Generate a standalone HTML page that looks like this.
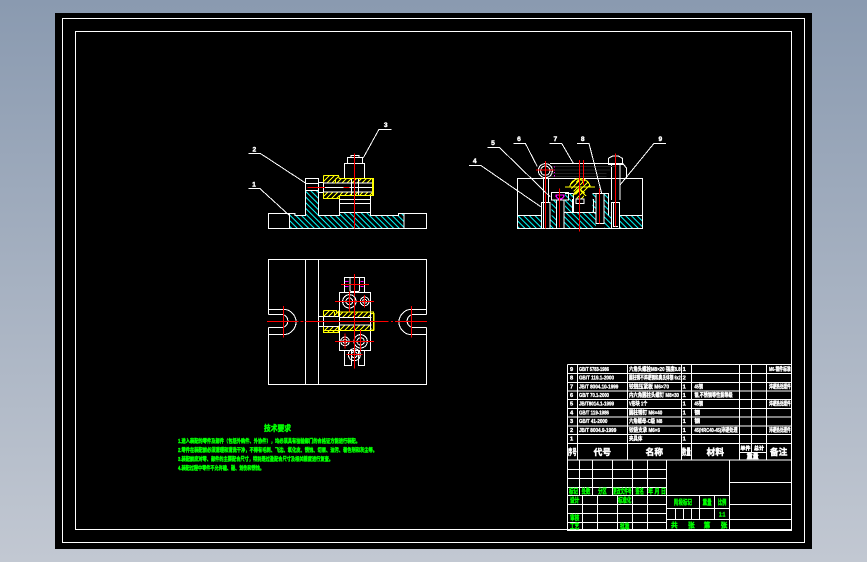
<!DOCTYPE html>
<html lang="zh"><head><meta charset="utf-8"><title>CAD</title>
<style>
html,body{margin:0;padding:0;width:867px;height:562px;overflow:hidden;background:linear-gradient(180deg,#8a9ab0 0%,#c2c8d2 100%)}
svg{position:absolute;left:0;top:0;display:block;shape-rendering:crispEdges}
svg *{shape-rendering:crispEdges}
text{font-family:"Liberation Sans","Noto Sans CJK SC",sans-serif;font-weight:700}
.w{fill:none;stroke:#fff;stroke-width:3.2}
.t{fill:none;stroke:#fff;stroke-width:3}
.r{fill:none;stroke:#f00;stroke-width:3.2}
.y{fill:none;stroke:#ff0;stroke-width:3.2}
.m{fill:none;stroke:#f0f;stroke-width:3.2}
.lab{fill:#fff;font-size:20px;stroke:#fff;stroke-width:1.2}
.tw{fill:#fff;font-size:17px;stroke:#fff;stroke-width:1.1}
.th{fill:#fff;font-size:26px;stroke:#fff;stroke-width:1.4}
.g{fill:#0f0;font-size:20px;stroke:#0f0;stroke-width:1.2}
.n{fill:#0f0;font-size:5.4px;stroke:#0f0;stroke-width:.42}
</style></head><body>
<svg width="867" height="562" viewBox="0 0 867 562" xmlns="http://www.w3.org/2000/svg">
<defs>
<pattern id="c" width="17" height="17" patternUnits="userSpaceOnUse"><path d="M0 0L17 17M-4 13L4 21M13 -4L21 4" stroke="#0ff" stroke-width="3"/></pattern>
<pattern id="yh" width="15" height="15" patternUnits="userSpaceOnUse"><path d="M0 15L15 0M-4 4L4 -4M11 19L19 11" stroke="#ff0" stroke-width="3.2"/></pattern>
</defs>
<rect x="55" y="13" width="757" height="536" fill="#000"/>
<rect x="62.5" y="18.5" width="742" height="524" fill="none" stroke="#fff"/>
<rect x="75.5" y="31.5" width="716" height="498" fill="none" stroke="#fff"/>

<!-- front view -->
<g transform="translate(230,110) scale(.33333)">
<path fill="url(#c)" d="M178 310H195V317H227V240H265V317H329V307H421V317H505V310H522V355H178Z"/>
<path fill="url(#yh)" d="M281 197H325V218H281ZM281 248H328V265H281ZM318 206H430V219H318ZM330 246H430V256H330Z"/>
<path class="w" d="M115 310H195V317H227V205H265V317H329V307H421V317H505V310H589V355H115ZM178 310V355M522 310V355"/>
<path class="w" d="M227 220H265V242H227ZM265 218H280V248H265ZM329 257V307M421 257V307M329 268H421M329 280H421"/>
<path class="w" d="M343 205V160H403V205M352 160V143H397V160M363 143V136H387V143"/>
<path class="w" d="M280 232H430M280 219H430M280 246H430M365 205V257M385 205V257"/>
<path class="y" d="M280 196H325L328 205H430V257H329V266H280V248M280 196V218M316 205V220M427 205V257"/>
<path class="r" d="M373 130V355M232 232H285M340 232H358"/>
<path class="t" d="M55 131H92L225 218M55 236H90L180 318M447 58H485M447 58L400 143"/>
<text class="lab" x="73" y="124" text-anchor="middle">2</text>
<text class="lab" x="72" y="229" text-anchor="middle">1</text>
<text class="lab" x="467" y="51" text-anchor="middle">3</text>
</g>

<!-- side view -->
<g transform="translate(450,125) scale(.33333)">
<path fill="url(#c)" d="M202 271H275V311H202ZM508 271H578V311H508ZM300 271H320V311H300ZM342 262H438V311H342ZM304 225H320V262H304ZM345 205H370V262H345ZM428 205H476V262H462V205H438V262H428ZM462 262H485V311H462Z"/>
<path class="w" d="M202 311V160H578V311ZM202 271H275M508 271H578M342 262H438"/>
<path class="w" d="M275 311V232H300V311M280 232V311M320 311V225H342V311M305 203H355V225H305ZM345 205H370M370 205V262M428 205H476V271M438 205V295H462V205M485 311V232H508V311M490 232V305H504M485 225V115H510V225M475 118V100L488 93H505L517 100V118ZM476 115H518"/>
<path class="w" d="M300 115H510M518 115L530 130V160"/>
<path d="M305 125H500M310 135H480M300 145H470M300 155H470" stroke="#222" stroke-width="3" fill="none"/>
<circle class="w" cx="286" cy="137" r="21"/><circle class="w" cx="286" cy="137" r="14"/>
<path class="w" d="M280 160V232M296 160V232"/>
<path class="m" d="M313 125v3M313 133v3M313 141v3M313 150v4"/>
<path d="M318 210A12 12 0 0 0 342 210Z" fill="none" stroke="#f0f" stroke-width="4"/>
<path d="M360 187A30 26 0 0 1 420 187L404 205L400 222H380L376 205Z" fill="url(#yh)"/>
<path class="y" d="M360 187A30 26 0 0 1 420 187M345 186H435M372 205L388 190L404 205M378 172L390 162L402 172M368 213L388 192L408 213"/>
<path class="w" d="M378 222H402V235H378ZM368 262V222M430 262V222"/>
<path class="r" d="M286 108V311M258 135H314M328 190V308M388 105V320M400 105V180M449 190V295M496 85V305"/>
<path class="t" d="M57 121H92L272 245M112 67H148L300 215M190 55H226L262 125M298 55H335L370 115M381 55H417L455 205M612 55H648M612 55L510 180"/>
<text class="lab" x="74" y="114" text-anchor="middle">4</text>
<text class="lab" x="129" y="60" text-anchor="middle">5</text>
<text class="lab" x="207" y="48" text-anchor="middle">6</text>
<text class="lab" x="316" y="48" text-anchor="middle">7</text>
<text class="lab" x="398" y="48" text-anchor="middle">8</text>
<text class="lab" x="631" y="48" text-anchor="middle">9</text>
</g>

<!-- plan view -->
<g transform="translate(255,250) scale(.33333)">
<path fill="url(#yh)" d="M205 181H250V199H205ZM205 229H250V247H205ZM250 185H350V201H250ZM250 227H350V243H250Z"/>
<path class="w" d="M40 178V28H514V178M40 254V403H514V254M151 28V403M190 28V403"/>
<path class="w" d="M40 178H85A38 38 0 0 1 85 254H40M40 194H85A20 20 0 0 1 85 232H40M40 178V194M40 232V254"/>
<path class="w" d="M514 178H470A38 38 0 0 0 470 254H514M514 194H470A20 20 0 0 0 470 232H514M514 178V194M514 232V254"/>
<path class="w" d="M253 127H347V302H253ZM268 127V82H329V127M285 82V118Q285 125 292 125H307Q314 125 314 118V82M268 302V346H290V302M329 302V346H310V302"/>
<circle class="w" cx="283" cy="154" r="20"/><circle class="w" cx="283" cy="154" r="10"/>
<circle class="w" cx="329" cy="154" r="13"/><circle class="w" cx="329" cy="154" r="6"/>
<circle class="w" cx="270" cy="274" r="13"/><circle class="w" cx="270" cy="274" r="6"/>
<circle class="w" cx="317" cy="274" r="20"/><circle class="w" cx="317" cy="274" r="11"/>
<circle class="w" cx="298" cy="314" r="18"/><circle class="w" cx="298" cy="314" r="9"/>
<path class="w" d="M190 199H205V230H190ZM205 199H253M205 230H253"/>
<path class="y" d="M205 181H245V186H355V242H205V247H250V229M205 181V199M205 229V247M250 181V199M238 186V199M350 190H357V240H350M212 214H240"/>
<path class="w" d="M255 203H350M255 225H350"/>
<path class="m" d="M270 95h10M316 95h10M270 109h10M316 109h10"/>
<path class="r" d="M36 214H130M137 214H145M152 214H400M408 214H414M420 214H516M85 168V262M470 168V262M298 72V140M298 145V356M258 103H342M240 154H325M315 154H357M283 125V185M329 135V172M240 274H300M300 274H357M270 250V296M317 240V305M275 314H322"/>
</g>

<!-- parts list -->
<g transform="translate(560,360) scale(.33333)">
<path class="w" d="M22 13H694M22 41H694M22 67H694M22 93H694M22 119H694M22 145H694M22 171H694M22 198H694M22 224H694M22 250H694M22 300H694M22 13V300M52 13V300M202 13V300M364 13V300M394 13V300M538 13V300M574 13V277M619 13V300M538 277H619"/>
<g class="tw">
<text x="30" y="33">9</text><text x="57" y="33" textLength="90" lengthAdjust="spacingAndGlyphs">GB/T 5783-1986</text><text x="207" y="33" textLength="155" lengthAdjust="spacingAndGlyphs">六角头螺栓M8×20 强度8.8</text><text x="368" y="33">1</text><text x="627" y="33" textLength="65" lengthAdjust="spacingAndGlyphs">M6-钢件标准</text>
<text x="30" y="59">8</text><text x="57" y="59" textLength="105" lengthAdjust="spacingAndGlyphs">GB/T 119.1-2000</text><text x="207" y="59" textLength="155" lengthAdjust="spacingAndGlyphs">圆柱销不淬硬钢和奥氏体钢 6x2</text><text x="368" y="59">2</text>
<text x="30" y="85">7</text><text x="57" y="85" textLength="118" lengthAdjust="spacingAndGlyphs">JB/T 8004.10-1999</text><text x="207" y="85" textLength="120" lengthAdjust="spacingAndGlyphs">铰链压紧板 M6×70</text><text x="368" y="85">1</text><text x="403" y="85" textLength="26" lengthAdjust="spacingAndGlyphs">45钢</text><text x="627" y="85" textLength="65" lengthAdjust="spacingAndGlyphs">淬硬热处理件</text>
<text x="30" y="111">6</text><text x="57" y="111" textLength="90" lengthAdjust="spacingAndGlyphs">GB/T 70.1-2000</text><text x="207" y="111" textLength="150" lengthAdjust="spacingAndGlyphs">内六角圆柱头螺钉 M8×30</text><text x="368" y="111">1</text><text x="403" y="111" textLength="115" lengthAdjust="spacingAndGlyphs">钢,不锈钢等性能等级</text>
<text x="30" y="137">5</text><text x="57" y="137" textLength="105" lengthAdjust="spacingAndGlyphs">JB/T8014.1-1999</text><text x="207" y="137" textLength="55" lengthAdjust="spacingAndGlyphs">V形块 1个</text><text x="368" y="137">1</text><text x="403" y="137" textLength="26" lengthAdjust="spacingAndGlyphs">45钢</text><text x="627" y="137" textLength="65" lengthAdjust="spacingAndGlyphs">淬硬热处理件</text>
<text x="30" y="163">4</text><text x="57" y="163" textLength="90" lengthAdjust="spacingAndGlyphs">GB/T 119-1986</text><text x="207" y="163" textLength="100" lengthAdjust="spacingAndGlyphs">圆柱销钉 M6×40</text><text x="368" y="163">1</text><text x="403" y="163">钢</text>
<text x="30" y="189">3</text><text x="57" y="189" textLength="85" lengthAdjust="spacingAndGlyphs">GB/T 41-2000</text><text x="207" y="189" textLength="100" lengthAdjust="spacingAndGlyphs">六角螺母-C级 M8</text><text x="368" y="189">1</text><text x="403" y="189">钢</text>
<text x="30" y="216">2</text><text x="57" y="216" textLength="112" lengthAdjust="spacingAndGlyphs">JB/T 8004.9-1999</text><text x="207" y="216" textLength="93" lengthAdjust="spacingAndGlyphs">铰链支承 M6×6</text><text x="368" y="216">1</text><text x="403" y="216" textLength="130" lengthAdjust="spacingAndGlyphs">45(HRC40-45)淬硬处理</text><text x="627" y="216" textLength="65" lengthAdjust="spacingAndGlyphs">淬硬热处理件</text>
<text x="30" y="242">1</text><text x="207" y="242" textLength="40" lengthAdjust="spacingAndGlyphs">夹具体</text><text x="368" y="242">1</text>
</g>
<g class="th">
<text x="37" y="285" text-anchor="middle" textLength="26" lengthAdjust="spacingAndGlyphs">序号</text>
<text x="127" y="285" text-anchor="middle">代号</text>
<text x="283" y="285" text-anchor="middle">名称</text>
<text x="379" y="285" text-anchor="middle" textLength="26" lengthAdjust="spacingAndGlyphs">数量</text>
<text x="466" y="285" text-anchor="middle">材料</text>
<text x="656" y="285" text-anchor="middle">备注</text>
<text x="556" y="270" text-anchor="middle" style="font-size:15px">单件</text>
<text x="597" y="270" text-anchor="middle" style="font-size:15px">总计</text>
<text x="578" y="296" text-anchor="middle" style="font-size:18px">重量</text>
</g>
</g>

<!-- title block -->
<g transform="translate(560,455) scale(.33333)">
<path class="w" d="M22 15H694V226H22ZM22 43H319M22 70H319M22 97H319M22 121H319M22 148H319M22 175H319M22 202H319M58 15V121M97 15V121M157 15V121M217 15V226M262 15V226M67 121V226M112 121V226M172 121V226M319 15V226M508 15V226M319 121H508M319 160H508M319 193H508M418 121V193M463 121V193M346 160V193M370 160V193M394 160V193M508 82H694M508 148H694M508 193H694"/>
<g class="g">
<text x="27" y="116" textLength="27" lengthAdjust="spacingAndGlyphs">标记</text>
<text x="65" y="116" textLength="26" lengthAdjust="spacingAndGlyphs">处数</text>
<text x="114" y="116" textLength="26" lengthAdjust="spacingAndGlyphs">分区</text>
<text x="159" y="116" textLength="56" lengthAdjust="spacingAndGlyphs">更改文件号</text>
<text x="226" y="116" textLength="26" lengthAdjust="spacingAndGlyphs">签名</text>
<text x="264" y="116" textLength="54" lengthAdjust="spacingAndGlyphs">年 月 日</text>
<text x="30" y="142" textLength="28" lengthAdjust="spacingAndGlyphs">设计</text>
<text x="174" y="142" textLength="40" lengthAdjust="spacingAndGlyphs">标准化</text>
<text x="30" y="195" textLength="28" lengthAdjust="spacingAndGlyphs">审核</text>
<text x="30" y="221" textLength="28" lengthAdjust="spacingAndGlyphs">工艺</text>
<text x="180" y="221" textLength="28" lengthAdjust="spacingAndGlyphs">批准</text>
<text x="342" y="148" textLength="54" lengthAdjust="spacingAndGlyphs">阶段标记</text>
<text x="428" y="148" textLength="27" lengthAdjust="spacingAndGlyphs">重量</text>
<text x="474" y="148" textLength="25" lengthAdjust="spacingAndGlyphs">比例</text>
<text x="477" y="185" textLength="19" lengthAdjust="spacingAndGlyphs">1:1</text>
<text x="333" y="217">共</text><text x="384" y="217">张</text><text x="431" y="217">第</text><text x="482" y="217">张</text>
</g>
</g>

<!-- technical requirements -->
<text x="277.5" y="431" text-anchor="middle" style="font-size:8px;fill:#0f0;stroke:#0f0;stroke-width:.5" textLength="27" lengthAdjust="spacingAndGlyphs">技术要求</text>
<text class="n" x="178" y="443" textLength="182" lengthAdjust="spacingAndGlyphs">1.进入装配的零件及部件（包括外购件、外协件），均必须具有检验部门的合格证方能进行装配。</text>
<text class="n" x="178" y="452" textLength="199" lengthAdjust="spacingAndGlyphs">2.零件在装配前必须清理和清洗干净，不得有毛刺、飞边、氧化皮、锈蚀、切屑、油污、着色剂和灰尘等。</text>
<text class="n" x="178" y="461" textLength="155" lengthAdjust="spacingAndGlyphs">3.装配前应对零、部件的主要配合尺寸，特别是过盈配合尺寸及相关精度进行复查。</text>
<text class="n" x="178" y="470" textLength="86" lengthAdjust="spacingAndGlyphs">4.装配过程中零件不允许磕、碰、划伤和锈蚀。</text>
</svg>
</body></html>
